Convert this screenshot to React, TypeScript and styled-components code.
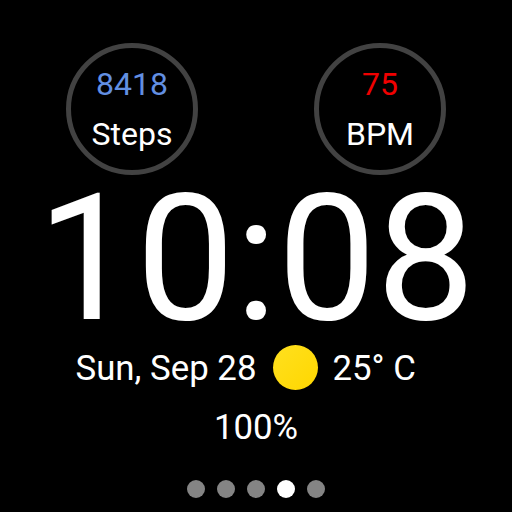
import React from 'react';
import styled, { createGlobalStyle } from 'styled-components';

const GlobalStyle = createGlobalStyle`
  * { box-sizing: border-box; }
  body { margin: 0; background: #000; overflow: hidden; }
`;

const WatchFace = styled.main`
  width: 512px;
  height: 512px;
  padding-top: 43px;
  background: #000;
  color: #fff;
  font-family: Roboto, sans-serif;
  white-space: pre;
`;

const Complications = styled.section`
  display: flex;
  justify-content: space-between;
  padding: 0 66px;
`;

const Ring = styled.div`
  width: 132px;
  height: 132px;
  border: 5px solid #424242;
  border-radius: 50%;
  display: flex;
  flex-direction: column;
  align-items: center;
  padding-top: 11px;
`;

const Value = styled.div<{ $color: string }>`
  color: ${(p) => p.$color};
  font-size: 32px;
  line-height: 50px;
`;

const Label = styled.div`
  font-size: 32px;
  line-height: 50px;
`;

const Time = styled.div`
  height: 161px;
  padding-left: 37px;
  font-size: 176px;
  line-height: 168px;
`;

const Conditions = styled.section`
  display: flex;
  align-items: center;
  height: 63px;
  padding-left: 75.5px;
  font-size: 34.8px;
`;

const Sun = styled.span`
  width: 45px;
  height: 45px;
  margin: 0 14.5px 0 16.5px;
  border-radius: 50%;
  background: linear-gradient(135deg, #ffe01f, #ffd700);
`;

const Battery = styled.div`
  height: 56px;
  line-height: 56px;
  text-align: center;
  font-size: 34.8px;
`;

const Pager = styled.nav`
  display: flex;
  justify-content: center;
  gap: 12px;
  margin-top: 25px;
`;

const Dot = styled.span<{ $active: boolean }>`
  width: 18px;
  height: 18px;
  border-radius: 50%;
  background: ${(p) => (p.$active ? '#fff' : '#848484')};
`;

export default function App() {
  return (
    <WatchFace>
      <GlobalStyle />
      <Complications>
        <Ring><Value $color="#628fe2">8418</Value><Label>Steps</Label></Ring>
        <Ring><Value $color="#f00000">75</Value><Label>BPM</Label></Ring>
      </Complications>
      <Time>10:08</Time>
      <Conditions><span>Sun, Sep 28</span><Sun /><span>25° C</span></Conditions>
      <Battery>100%</Battery>
      <Pager>{[0, 1, 2, 3, 4].map((i) => <Dot key={i} $active={i === 3} />)}</Pager>
    </WatchFace>
  );
}
